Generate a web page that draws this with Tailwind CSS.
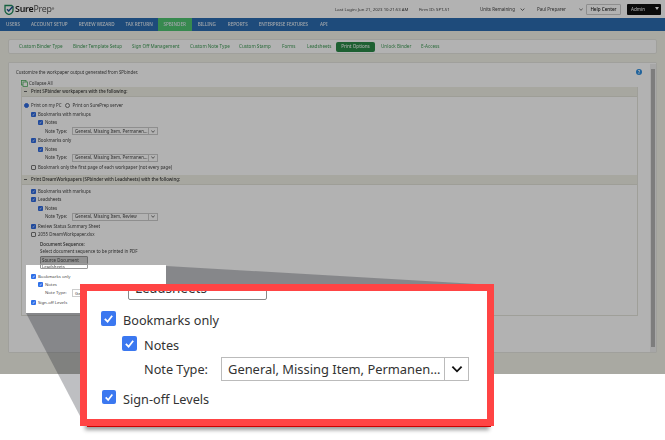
<!DOCTYPE html>
<html lang="en">
<head>
    <meta charset="UTF-8">
    <title>SurePrep - Print Options</title>
    <script src="https://cdn.jsdelivr.net/npm/@tailwindcss/browser@4"></script>
</head>
<body class="bg-white font-['Noto_Sans',sans-serif]">
<div class="relative w-[665px] h-[440px] overflow-hidden">

    <!-- dimmed application -->
    <div class="relative w-[665px] h-[374px] overflow-hidden bg-[#f3f3e9] blur-[0.55px] text-[4.400px] text-[#444]">
        <!-- top bar -->
        <div class="h-[18px] bg-white flex items-center">
            <div class="flex items-center pl-[4px] w-[335px] shrink-0">
                <svg width="10" height="11" viewBox="0 0 10 11"><path d="M1 1.500h6.500L9 2.500v3.700C9 8.500 6.500 10 5 10.500 3.500 10 1 8.500 1 6.200z" fill="none" stroke="#1f8a5b" stroke-width="1.300"/><path d="M3 5.200l1.700 1.800L8.800 2.500" fill="none" stroke="#1d4f91" stroke-width="1.400"/></svg>
                <span class="ml-[1px] text-[8.800px] leading-none text-[#222] tracking-[-0.2px]"><b class="font-semibold">Sure</b><span class="text-[#555]">Prep</span><sup class="text-[3px]">®</sup></span>
            </div>
            <span class="w-[84px] shrink-0 text-[4.300px] whitespace-nowrap">Last Login: Jun 21, 2023 10:21:53 AM</span>
            <span class="w-[61px] shrink-0 text-[4.300px] whitespace-nowrap">Firm ID: SPT-51</span>
            <span class="w-[40px] shrink-0 text-[4.500px] whitespace-nowrap">Units Remaining</span>
            <svg class="w-[5px] h-[3px] mr-[12px] shrink-0" viewBox="0 0 6 4"><path d="M.5.800 3 3.200 5.500.800" fill="none" stroke="#333"/></svg>
            <span class="w-[42px] shrink-0 text-[4.500px] whitespace-nowrap">Paul Preparer</span>
            <svg class="w-[4px] h-[3px] mr-[3px] shrink-0" viewBox="0 0 6 4"><path d="M.5.800 3 3.200 5.500.800" fill="none" stroke="#333"/></svg>
            <span class="w-[35px] h-[11px] shrink-0 border border-[#ccc] rounded-[1px] flex items-center justify-center text-[4.600px] font-medium text-[#222] whitespace-nowrap">Help Center</span>
            <span class="ml-[6px] w-[34px] h-[11px] shrink-0 bg-[#111] rounded-[1px] flex items-center pl-[4px] text-[4.600px] text-white relative">Admin<span class="absolute right-[2px] top-[3px] border-x-[2px] border-t-[3px] border-x-transparent border-t-white"></span></span>
        </div>
        <!-- main nav -->
        <div class="h-[13px] bg-[#2b6cb0] flex items-center text-[4.600px] font-medium text-[#e8eef5] whitespace-nowrap pl-[6px]">
            <span>USERS</span>
            <span class="ml-[11px]">ACCOUNT SETUP</span>
            <span class="ml-[11px]">REVIEW WIZARD</span>
            <span class="ml-[11px]">TAX RETURN</span>
            <span class="ml-[5px] h-[13px] w-[34px] bg-[#4fc472] flex items-center justify-center">SPBINDER</span>
            <span class="ml-[6px]">BILLING</span>
            <span class="ml-[12px]">REPORTS</span>
            <span class="ml-[11px]">ENTERPRISE FEATURES</span>
            <span class="ml-[12px]">API</span>
        </div>
        <!-- sub nav -->
        <div class="mt-[8px] mx-[8px] h-[15px] bg-white rounded-[2px] border border-[#e6e6e0] flex items-center pl-[10px] text-[4.600px] text-[#3f9a55] whitespace-nowrap">
            <span class="w-[54px]">Custom Binder Type</span>
            <span class="w-[59px]">Binder Template Setup</span>
            <span class="w-[58px]">Sign Off Management</span>
            <span class="w-[49px]">Custom Note Type</span>
            <span class="w-[43px]">Custom Stamp</span>
            <span class="w-[25px]">Forms</span>
            <span class="w-[29px]">Leadsheets</span>
            <span class="w-[39px] h-[10px] bg-[#2a8a48] rounded-[2px] flex items-center justify-center text-white">Print Options</span>
            <span class="ml-[6px] w-[40px]">Unlock Binder</span>
            <span>E-Access</span>
        </div>
        <!-- panel -->
        <div class="relative mt-[8px] ml-[8px] w-[649px] h-[291px] bg-white border border-[#e6e6e0] rounded-[1px] pl-[7px] pt-[6px]">
            <p class="h-[7px] leading-[7px] text-[4.400px]">Customize the workpaper output generated from SPbinder.</p>
            <div class="flex items-center h-[8px] mt-[3px] pl-[5px]">
                <svg width="7" height="7" viewBox="0 0 7 7"><rect x=".5" y=".5" width="4.500" height="4.500" fill="none" stroke="#4fae5f" stroke-width=".8"/><rect x="2" y="2" width="4.500" height="4.500" fill="#fff" stroke="#4fae5f" stroke-width=".8"/></svg>
                <span class="ml-[1px]">Collapse All</span>
            </div>
            <span class="absolute top-[6px] left-[627px] size-[6px] rounded-full bg-[#2f8fe0] text-white text-[4.500px] leading-[6px] text-center font-bold">?</span>

            <div class="w-[617px] ml-[5px] h-[229px] border border-[#e4e4dc] border-t-0">
                <div class="h-[10px] bg-[#f0f0e6] border-b border-[#e2e2d8] flex items-center pl-[2px]">
                    <span class="w-[3px] h-[1px] bg-[#666] mr-[4px]"></span><span class="font-medium text-[#333]">Print SPbinder workpapers with the following:</span>
                </div>
                <div class="pl-[2px] h-[78px] pt-[4.500px]">
                    <div class="flex items-center h-[8.500px]">
                        <span class="size-[5px] rounded-full border border-[#2f6ae0] bg-[#2f6ae0] mr-[2px]"></span><span>Print on my PC</span>
                        <span class="size-[5px] rounded-full border-[0.7px] border-[#777] bg-white ml-[4px] mr-[2px]"></span><span>Print on SurePrep server</span>
                    </div>
                    <div class="flex items-center h-[8.500px] pl-[7px]"><span class="size-[5px] bg-[#2f6ae0] rounded-[1px] mr-[2px] text-white text-[4px] leading-[5px] text-center">✓</span><span>Bookmarks with markups</span></div>
                    <div class="flex items-center h-[8.500px] pl-[14px]"><span class="size-[5px] bg-[#2f6ae0] rounded-[1px] mr-[2px] text-white text-[4px] leading-[5px] text-center">✓</span><span>Notes</span></div>
                    <div class="flex items-center h-[8.500px] pl-[21px]"><span class="w-[27px]">Note Type:</span><span class="w-[86px] h-[8px] bg-white border-[0.7px] border-[#ccc] flex items-center pl-[2px] whitespace-nowrap"><span class="w-[75px]">General, Missing Item, Permanen…</span><span class="w-[9px] h-full border-l-[0.7px] border-[#ccc] flex items-center justify-center"><svg class="w-[4px] h-[3px]" viewBox="0 0 6 4"><path d="M.5.800 3 3.200 5.500.800" fill="none" stroke="#222"/></svg></span></span></div>
                    <div class="flex items-center h-[8.500px] mt-[1px] pl-[7px]"><span class="size-[5px] bg-[#2f6ae0] rounded-[1px] mr-[2px] text-white text-[4px] leading-[5px] text-center">✓</span><span>Bookmarks only</span></div>
                    <div class="flex items-center h-[8.500px] pl-[14px]"><span class="size-[5px] bg-[#2f6ae0] rounded-[1px] mr-[2px] text-white text-[4px] leading-[5px] text-center">✓</span><span>Notes</span></div>
                    <div class="flex items-center h-[8.500px] pl-[21px]"><span class="w-[27px]">Note Type:</span><span class="w-[86px] h-[8px] bg-white border-[0.7px] border-[#ccc] flex items-center pl-[2px] whitespace-nowrap"><span class="w-[75px]">General, Missing Item, Permanen…</span><span class="w-[9px] h-full border-l-[0.7px] border-[#ccc] flex items-center justify-center"><svg class="w-[4px] h-[3px]" viewBox="0 0 6 4"><path d="M.5.800 3 3.200 5.500.800" fill="none" stroke="#222"/></svg></span></span></div>
                    <div class="flex items-center h-[8.500px] mt-[1px] pl-[7px]"><span class="size-[5px] bg-white border-[0.7px] border-[#777] rounded-[1px] mr-[2px]"></span><span>Bookmark only the first page of each workpaper (not every page)</span></div>
                </div>
                <div class="h-[10px] bg-[#f0f0e6] border-b border-[#e2e2d8] flex items-center pl-[2px]">
                    <span class="w-[3px] h-[1px] bg-[#666] mr-[4px]"></span><span class="font-medium text-[#333]">Print DreamWorkpapers (SPbinder with Leadsheets) with the following:</span>
                </div>
                <div class="pl-[2px] pt-[2px]">
                    <div class="flex items-center h-[8.500px] pl-[7px]"><span class="size-[5px] bg-[#2f6ae0] rounded-[1px] mr-[2px] text-white text-[4px] leading-[5px] text-center">✓</span><span>Bookmarks with markups</span></div>
                    <div class="flex items-center h-[8.500px] pl-[7px]"><span class="size-[5px] bg-[#2f6ae0] rounded-[1px] mr-[2px] text-white text-[4px] leading-[5px] text-center">✓</span><span>Leadsheets</span></div>
                    <div class="flex items-center h-[8.500px] pl-[14px]"><span class="size-[5px] bg-[#2f6ae0] rounded-[1px] mr-[2px] text-white text-[4px] leading-[5px] text-center">✓</span><span>Notes</span></div>
                    <div class="flex items-center h-[8.500px] pl-[21px]"><span class="w-[27px]">Note Type:</span><span class="w-[86px] h-[8px] bg-white border-[0.7px] border-[#ccc] flex items-center pl-[2px] whitespace-nowrap"><span class="w-[75px]">General, Missing Item, Review</span><span class="w-[9px] h-full border-l-[0.7px] border-[#ccc] flex items-center justify-center"><svg class="w-[4px] h-[3px]" viewBox="0 0 6 4"><path d="M.5.800 3 3.200 5.500.800" fill="none" stroke="#222"/></svg></span></span></div>
                    <div class="flex items-center h-[8.500px] mt-[1px] pl-[7px]"><span class="size-[5px] bg-[#2f6ae0] rounded-[1px] mr-[2px] text-white text-[4px] leading-[5px] text-center">✓</span><span>Review Status Summary Sheet</span></div>
                    <div class="flex items-center h-[8.500px] pl-[7px]"><span class="size-[5px] bg-white border-[0.7px] border-[#777] rounded-[1px] mr-[2px]"></span><span>2055 DreamWorkpaper.xlsx</span></div>
                    <div class="pl-[16px]">
                        <p class="h-[8px] leading-[8px] mt-[1px] font-medium text-[#333]">Document Sequence:</p>
                        <p class="h-[7px] leading-[7px]">Select document sequence to be printed in PDF</p>
                        <div class="w-[48px] h-[15px] mt-[1px] border-[0.7px] border-[#999] rounded-[1px] bg-white">
                            <div class="h-[7.500px] leading-[7.500px] bg-[#d0d0d0] pl-[1px]">Source Document</div>
                            <div class="h-[7px] leading-[7px] pl-[1px]">Leadsheets</div>
                        </div>
                    </div>
                </div>
            </div>
            <!-- scrollbar -->
            <div class="absolute top-[1px] right-[0px] w-[6px] h-[288px] bg-[#efefef]">
                <div class="mt-[5px] mx-[1px] h-[278px] bg-[#b4b4b4]"></div>
            </div>
        </div>
        <!-- dim overlay -->
        <div class="absolute inset-0 bg-black/30"></div>
    </div>

    <!-- wedge linking the two callouts -->
    <svg class="absolute left-0 top-0" width="665" height="440">
        <polygon points="26,313 166,266 494,285 80,416" fill="#141a24" fill-opacity=".28"/>
    </svg>

    <!-- small callout -->
    <div class="absolute left-[26px] top-[265px] w-[140px] h-[48px] bg-white text-[4.300px] text-[#444] blur-[0.25px] pl-[5px] pt-[7px]">
        <div class="absolute left-[14px] top-[-2px] w-[48px] h-[6px] border-[0.7px] border-[#999] rounded-[1px] pl-[1px] leading-[5px] overflow-hidden">Leadsheets</div>
        <div class="flex items-center h-[8px]"><span class="size-[5px] bg-[#2f6fe8] rounded-[1px] mr-[2px] text-white text-[4px] leading-[5px] text-center">✓</span>Bookmarks only</div>
        <div class="flex items-center h-[8px] pl-[7px]"><span class="size-[5px] bg-[#2f6fe8] rounded-[1px] mr-[2px] text-white text-[4px] leading-[5px] text-center">✓</span>Notes</div>
        <div class="flex items-center h-[9px] pl-[14px]"><span class="w-[27px]">Note Type:</span><span class="w-[40px] h-[8px] border-[0.7px] border-[#ccc] pl-[2px] leading-[6px]">General</span></div>
        <div class="flex items-center h-[11px]"><span class="size-[5px] bg-[#2f6fe8] rounded-[1px] mr-[2px] text-white text-[4px] leading-[5px] text-center">✓</span>Sign-off Levels</div>
    </div>

    <!-- big callout -->
    <div class="absolute left-[87px] top-[295px] w-[404px] h-[132px] bg-[#c00] shadow-[-2px_3px_4px_rgba(0,0,0,0.4)]"></div>
    <div class="absolute left-[80px] top-[284px] w-[414px] h-[142px] bg-white border-[7px] border-[#ff4444] overflow-hidden text-[12.700px] text-[#333] leading-none">
        <div class="absolute left-[41px] top-[-14px] w-[139px] h-[23px] border border-[#888] rounded-[2px] pl-[6px] pt-[4px] text-[13.500px]">Leadsheets</div>
        <div class="absolute left-[14px] top-[19px] flex items-center">
            <span class="size-[15px] bg-[#3b78f0] rounded-[2px] flex items-center justify-center"><svg class="size-[11px]" viewBox="0 0 12 12"><path d="M2 6.500l3 3 5-6.500" fill="none" stroke="#fff" stroke-width="2"/></svg></span>
            <span class="ml-[7px] mt-[4px]">Bookmarks only</span>
        </div>
        <div class="absolute left-[35px] top-[44px] flex items-center">
            <span class="size-[15px] bg-[#3b78f0] rounded-[2px] flex items-center justify-center"><svg class="size-[11px]" viewBox="0 0 12 12"><path d="M2 6.500l3 3 5-6.500" fill="none" stroke="#fff" stroke-width="2"/></svg></span>
            <span class="ml-[7px] mt-[4px]">Notes</span>
        </div>
        <div class="absolute left-[57px] top-[66px] flex items-center">
            <span class="w-[77px]">Note Type:</span>
            <span class="w-[248px] h-[24px] border border-[#bbb] flex items-center pl-[6px] whitespace-nowrap text-[12.900px]"><span class="w-[217px]">General, Missing Item, Permanen…</span><span class="w-[24px] h-full border-l border-[#bbb] flex items-center justify-center"><svg class="w-[12px] h-[8px]" viewBox="0 0 13 8"><path d="M1.500 1.500 6.500 6.500 11.500 1.500" fill="none" stroke="#111" stroke-width="2"/></svg></span></span>
        </div>
        <div class="absolute left-[15px] top-[98px] flex items-center">
            <span class="size-[14px] bg-[#3b78f0] rounded-[2px] flex items-center justify-center"><svg class="size-[10px]" viewBox="0 0 12 12"><path d="M2 6.500l3 3 5-6.500" fill="none" stroke="#fff" stroke-width="2"/></svg></span>
            <span class="ml-[7px] mt-[4px]">Sign-off Levels</span>
        </div>
    </div>
</div>
</body>
</html>
